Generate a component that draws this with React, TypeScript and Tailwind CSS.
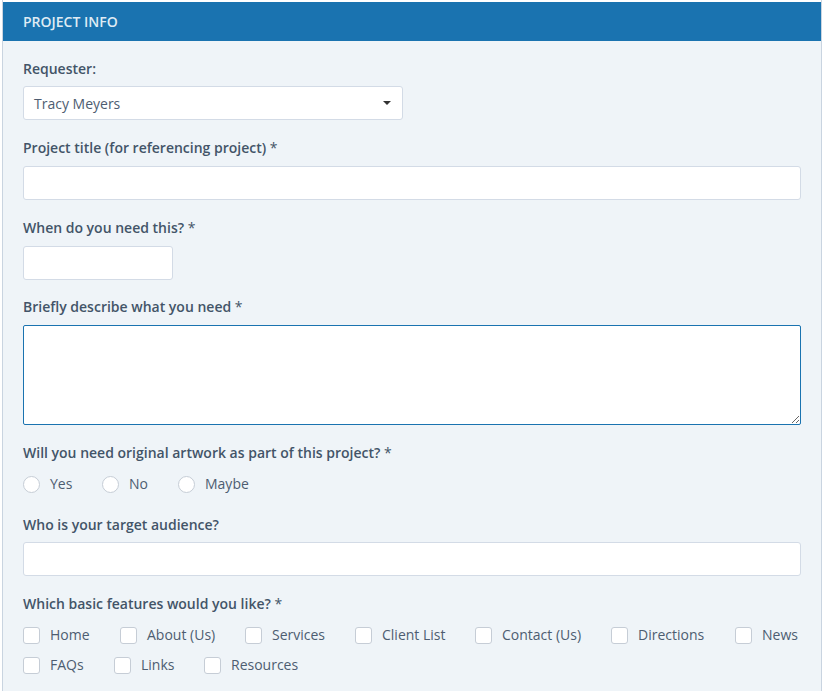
const inputClass = "block h-[34px] rounded-[3px] border border-[#d3dbe6] bg-white";

function Label({ children, required }: { children: React.ReactNode; required?: boolean }) {
  return (
    <div className="h-5 text-[14px] leading-5 font-semibold text-[#435468]">
      {children}
      {required && <span className="font-normal"> *</span>}
    </div>
  );
}

function Radio({ label, className }: { label: string; className: string }) {
  return (
    <div className={`flex items-center ${className}`}>
      <span className="h-[17px] w-[17px] rounded-full border border-[#c6cdd6] bg-white" />
      <span className="ml-[10px] text-[14px] leading-5 text-[#4d5d71]">{label}</span>
    </div>
  );
}

function Check({ label, className }: { label: string; className: string }) {
  return (
    <div className={`flex items-center ${className}`}>
      <span className="h-[17px] w-[17px] rounded-[3px] border border-[#c6cdd6] bg-white" />
      <span className="ml-[10px] text-[14px] leading-5 text-[#4d5d71]">{label}</span>
    </div>
  );
}

export default function App() {
  return (
    <div className="h-[691px] w-[827px] overflow-hidden bg-white pl-[2px] font-['Open_Sans',sans-serif]">
      <div className="h-[691px] w-[820px] border-x border-[#c9d4e0] bg-white pt-[2px]">
        <div className="flex h-[39px] items-center bg-[#1a73b0] pl-5 text-[14px] font-semibold text-[#dfebf4]">
          PROJECT INFO
        </div>
        <div className="h-[650px] bg-[#eff4f8] px-5 pt-[18px]">
          <Label>Requester:</Label>
          <div className={`${inputClass} mt-[7px] flex w-[380px] items-center justify-between pr-[11px] pl-[10px] text-[14px] text-[#4d5d71]`}>
            <span>Tracy Meyers</span>
            <span className="h-0 w-0 border-x-[4px] border-t-[4px] border-x-transparent border-t-[#333]" />
          </div>

          <div className="mt-[18px]"><Label required>Project title (for referencing project)</Label></div>
          <div className={`${inputClass} mt-2 w-[778px]`} />

          <div className="mt-[18px]"><Label required>When do you need this?</Label></div>
          <div className={`${inputClass} mt-2 w-[150px]`} />

          <div className="mt-[17px]"><Label required>Briefly describe what you need</Label></div>
          <textarea
            readOnly
            className="mt-2 block h-[100px] w-[778px] rounded-[2px] border border-[#1a73b0] bg-white outline-none"
          />

          <div className="mt-[18px]"><Label required>Will you need original artwork as part of this project?</Label></div>
          <div className="mt-[11px] flex h-5">
            <Radio label="Yes" className="w-[79px]" />
            <Radio label="No" className="w-[76px]" />
            <Radio label="Maybe" className="w-[90px]" />
          </div>

          <div className="mt-[21px]"><Label>Who is your target audience?</Label></div>
          <div className={`${inputClass} mt-[7px] w-[778px]`} />

          <div className="mt-[18px]"><Label required>Which basic features would you like?</Label></div>
          <div className="mt-[11px] flex h-5">
            <Check label="Home" className="w-[97px]" />
            <Check label="About (Us)" className="w-[125px]" />
            <Check label="Services" className="w-[110px]" />
            <Check label="Client List" className="w-[120px]" />
            <Check label="Contact (Us)" className="w-[136px]" />
            <Check label="Directions" className="w-[124px]" />
            <Check label="News" className="w-[66px]" />
          </div>
          <div className="mt-[10px] flex h-5">
            <Check label="FAQs" className="w-[91px]" />
            <Check label="Links" className="w-[90px]" />
            <Check label="Resources" className="w-[110px]" />
          </div>
        </div>
      </div>
    </div>
  );
}
